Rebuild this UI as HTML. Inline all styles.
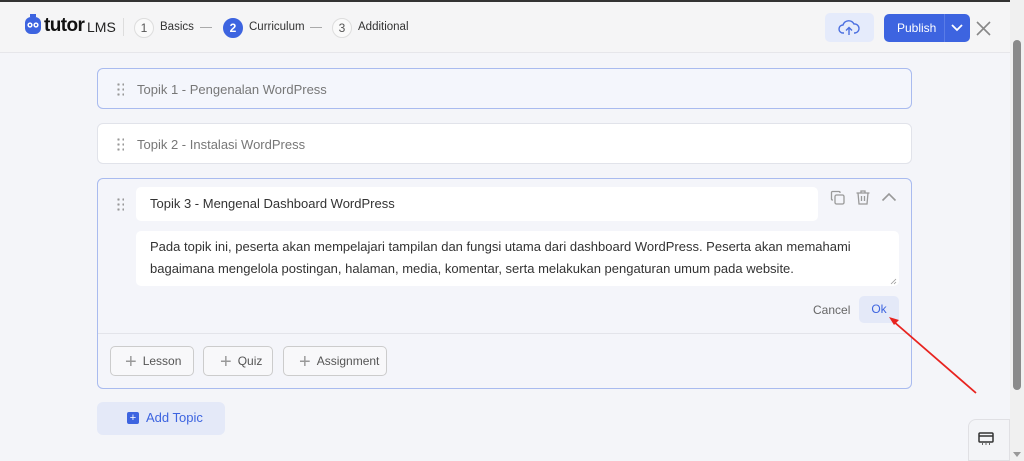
<!DOCTYPE html>
<html><head><style>
*{box-sizing:border-box;margin:0;padding:0}
body{width:1024px;height:461px;overflow:hidden;background:#f4f5f9;font-family:"Liberation Sans",sans-serif;position:relative;color:#444}
.top{position:absolute;left:0;top:0;width:1010px;height:53px;background:#f5f5f6;border-top:2px solid #333;border-bottom:1px solid #e6e6ea}
.abs{position:absolute}
.step{position:absolute;top:16px;width:20px;height:20px;border-radius:50%;border:1px solid #ddd;font-size:12px;text-align:center;line-height:18px;color:#555;background:#fafafa}
.lbl{position:absolute;top:19px;font-size:11.5px;color:#333}
.dash{position:absolute;top:25px;width:12px;height:1px;background:#aaa}
.card{position:absolute;left:97px;width:815px;border:1px solid #e1e3ea;border-radius:6px;background:#fff}
.dots{position:absolute;width:8px;height:14px;background-image:radial-gradient(circle,#999 1.1px,transparent 1.3px);background-size:5px 5px}
.t{position:absolute;font-size:13px;color:#777}
.btn{position:absolute;top:346px;height:30px;border:1px solid #ccc;border-radius:5px;font-size:12px;color:#555;line-height:28px;background:#f8f8fa}
.btn span{font-size:20px;color:#999;vertical-align:-3px;margin-right:6px;font-weight:300}
</style></head><body>
<div class="top">
 <svg class="abs" style="left:24px;top:12px" width="18" height="22" viewBox="0 0 18 22"><rect x="6" y="0" width="6" height="3" fill="#3d64e0"/><rect x="1" y="3" width="16" height="17" rx="6" fill="#3d64e0"/><circle cx="6" cy="11" r="2.6" fill="#fff"/><circle cx="12" cy="11" r="2.6" fill="#fff"/><circle cx="6" cy="11" r="1.1" fill="#3d64e0"/><circle cx="12" cy="11" r="1.1" fill="#3d64e0"/></svg>
 <div class="abs" style="left:44px;top:13px;font-size:19px;font-weight:bold;color:#111;letter-spacing:-0.6px">tutor</div>
 <div class="abs" style="left:87px;top:17px;font-size:14px;color:#222">LMS</div>
 <div class="abs" style="left:123px;top:16px;width:1px;height:18px;background:#ddd"></div>
 <div class="step" style="left:134px">1</div><div class="lbl" style="left:160px">Basics</div><div class="dash" style="left:200px"></div>
 <div class="step" style="left:223px;background:#3d64e0;border-color:#3d64e0;color:#fff;font-weight:bold">2</div><div class="lbl" style="left:249px">Curriculum</div><div class="dash" style="left:310px"></div>
 <div class="step" style="left:332px">3</div><div class="lbl" style="left:358px">Additional</div>
 <div class="abs" style="left:825px;top:11px;width:49px;height:29px;background:#e5ebfb;border-radius:5px"></div>
 <svg class="abs" style="left:838px;top:17px" width="22" height="18" viewBox="0 0 22 18" fill="none" stroke="#4b6fe0" stroke-width="1.4"><path d="M6 14H5a4 4 0 010-8 6 6 0 0111-1 4.5 4.5 0 011 9h-1"/><path d="M11 16V9M8 11.5l3-3 3 3"/></svg>
 <div class="abs" style="left:884px;top:12px;width:86px;height:28px;background:#3d64e0;border-radius:5px"></div>
 <div class="abs" style="left:897px;top:19px;font-size:12px;color:#fff">Publish</div>
 <div class="abs" style="left:944px;top:12px;width:1px;height:28px;background:#5a7ce6"></div>
 <svg class="abs" style="left:950px;top:21px" width="14" height="10" viewBox="0 0 14 10" fill="none" stroke="#fff" stroke-width="1.8"><path d="M2 2l5 5 5-5"/></svg>
 <svg class="abs" style="left:976px;top:19px" width="15" height="15" viewBox="0 0 15 15" stroke="#888" stroke-width="1.6"><path d="M1 1l13 13M14 1L1 14"/></svg>
</div>

<div class="card" style="top:68px;height:41px;background:#f4f6fc;border-color:#a9bbef"><div class="dots" style="left:18px;top:13px"></div><div class="t" style="left:39px;top:13px">Topik 1 - Pengenalan WordPress</div></div>
<div class="card" style="top:123px;height:41px"><div class="dots" style="left:18px;top:13px"></div><div class="t" style="left:39px;top:13px">Topik 2 - Instalasi WordPress</div></div>

<div class="card" style="top:178px;height:211px;background:#f4f5fa;border-color:#a9bbef">
 <div class="dots" style="left:18px;top:18px"></div>
 <div class="abs" style="left:38px;top:8px;width:682px;height:34px;background:#fff;border-radius:5px"></div>
 <div class="t" style="left:52px;top:17px;color:#333">Topik 3 - Mengenal Dashboard WordPress</div>
 <svg class="abs" style="left:732px;top:11px" width="16" height="16" viewBox="0 0 16 16" fill="none" stroke="#999" stroke-width="1.3"><rect x="5" y="5" width="9" height="9" rx="1.5"/><path d="M3 10H2.5A1 1 0 011.5 9V2.5a1 1 0 011-1H9a1 1 0 011 1V3"/></svg>
 <svg class="abs" style="left:757px;top:10px" width="16" height="17" viewBox="0 0 16 17" fill="none" stroke="#999" stroke-width="1.3"><path d="M1.5 4h13M6 4V2h4v2M3 4l1 11h8l1-11M6.5 7v5M9.5 7v5"/></svg>
 <svg class="abs" style="left:783px;top:13px" width="16" height="10" viewBox="0 0 16 10" fill="none" stroke="#999" stroke-width="1.6"><path d="M1.5 8.5L8 2l6.5 6.5"/></svg>
 <div class="abs" style="left:38px;top:52px;width:763px;height:55px;background:#fff;border-radius:5px;font-size:13px;color:#333;line-height:22px;padding:5px 14px">Pada topik ini, peserta akan mempelajari tampilan dan fungsi utama dari dashboard WordPress. Peserta akan memahami bagaimana mengelola postingan, halaman, media, komentar, serta melakukan pengaturan umum pada website.</div>
 <svg class="abs" style="left:792px;top:99px" width="7" height="7" viewBox="0 0 7 7" stroke="#999" stroke-width="0.8"><path d="M1 6L6 1M4 6L6 4"/></svg>
 <div class="abs" style="left:715px;top:124px;font-size:12px;color:#666">Cancel</div>
 <div class="abs" style="left:761px;top:117px;width:40px;height:27px;background:#e4e9f8;border-radius:5px;font-size:12px;color:#3d64e0;text-align:center;line-height:27px">Ok</div>
 <div class="abs" style="left:0;top:154px;width:813px;height:1px;background:#e3e4ea"></div>
</div>
<div class="btn" style="left:110px;width:84px;padding-left:14px"><span>+</span>Lesson</div>
<div class="btn" style="left:203px;width:70px;padding-left:16px"><span>+</span>Quiz</div>
<div class="btn" style="left:283px;width:104px;padding-left:15px"><span>+</span>Assignment</div>

<div class="abs" style="left:97px;top:402px;width:128px;height:33px;background:#e4e9f8;border-radius:6px"></div>
<div class="abs" style="left:127px;top:412px;width:12px;height:12px;background:#3d64e0;border-radius:2px;color:#fff;font-size:11px;line-height:12px;text-align:center">+</div>
<div class="abs" style="left:146px;top:410px;font-size:13px;color:#3d64e0">Add Topic</div>

<svg class="abs" style="left:0;top:0" width="1010" height="461"><path d="M976 393L893 321" stroke="#e8231f" stroke-width="1.8"/><path d="M889 317l10 3-5 5z" fill="#e8231f"/></svg>

<div class="abs" style="left:968px;top:419px;width:42px;height:42px;background:#f3f4f7;border:1px solid #e0e0e4;border-radius:8px 0 0 0"></div>
<svg class="abs" style="left:978px;top:432px" width="16" height="13" viewBox="0 0 16 13" fill="none" stroke="#333" stroke-width="1.5"><rect x="1" y="1" width="14" height="9" rx="1"/><path d="M1 4h14M4 12h1M7.5 12h1M11 12h1"/></svg>

<div class="abs" style="left:1010px;top:0;width:14px;height:461px;background:#f0f0f0"></div>
<div class="abs" style="left:1013px;top:40px;width:8px;height:350px;background:#8a8a8a;border-radius:4px"></div>
<div class="abs" style="left:1013px;top:452px;width:0;height:0;border-left:4px solid transparent;border-right:4px solid transparent;border-top:5px solid #999"></div>
</body></html>
